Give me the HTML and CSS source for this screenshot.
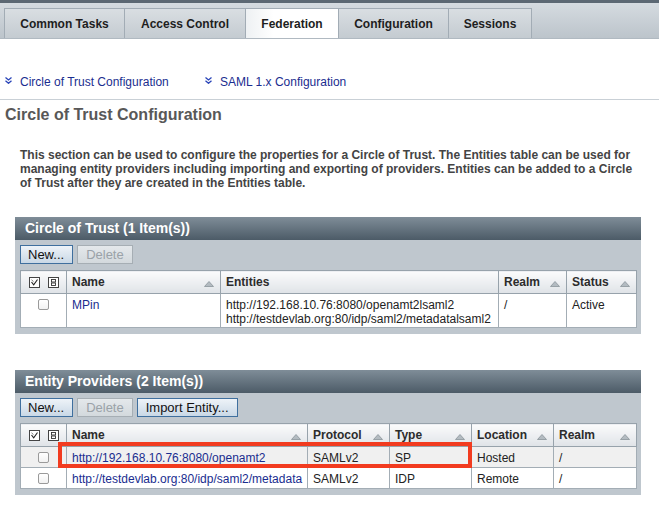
FILE: index.html
```html
<!DOCTYPE html>
<html>
<head>
<meta charset="utf-8">
<link rel="stylesheet" href="styles.css">
</head>
<body>
<div class="topbar"></div>
<div class="tabs">
  <div class="tab w-common">Common Tasks</div>
  <div class="tab w-access">Access Control</div>
  <div class="tab w-fed active">Federation</div>
  <div class="tab w-conf">Configuration</div>
  <div class="tab w-sess">Sessions</div>
</div>
<div class="subnav">
  <a class="sublink first"><svg class="dchev" width="7" height="7" viewBox="0 0 7 7"><polyline points="0.5,0.5 3.5,3 6.5,0.5" /><polyline points="0.5,3.8 3.5,6.3 6.5,3.8" /></svg>Circle of Trust Configuration</a>
  <a class="sublink"><svg class="dchev" width="7" height="7" viewBox="0 0 7 7"><polyline points="0.5,0.5 3.5,3 6.5,0.5" /><polyline points="0.5,3.8 3.5,6.3 6.5,3.8" /></svg>SAML 1.x Configuration</a>
</div>
<h1 class="title">Circle of Trust Configuration</h1>
<p class="desc">This section can be used to configure the properties for a Circle of Trust. The Entities table can be used for managing entity providers including importing and exporting of providers. Entities can be added to a Circle of Trust after they are created in the Entities table.</p>

<section class="panel cot">
  <div class="panel-head">Circle of Trust (1 Item(s))</div>
  <div class="panel-body">
    <div class="buttons">
      <span class="btn primary">New...</span>
      <span class="btn disabled">Delete</span>
    </div>
    <div class="table-wrap">
      <table class="grid">
        <colgroup><col class="c-chk"><col class="c-name1"><col class="c-ent"><col class="c-realm1"><col class="c-status"></colgroup>
        <thead>
          <tr>
            <th class="chk-head"><span class="hicons"><svg width="11" height="11" viewBox="0 0 11 11"><rect x="0.5" y="0.5" width="10" height="10" fill="#fff" stroke="#444"/><polyline points="2.5,5 4.7,7.8 8.5,2.5" fill="none" stroke="#222" stroke-width="1.1"/><line x1="2.5" y1="2.8" x2="4.5" y2="4.6" stroke="#555" stroke-width="0.8"/></svg><svg width="11" height="11" viewBox="0 0 11 11"><rect x="0.5" y="0.5" width="10" height="10" fill="#fff" stroke="#444"/><rect x="3.5" y="2.5" width="4" height="2.5" fill="none" stroke="#333" stroke-width="0.9"/><rect x="3.5" y="6" width="4" height="2.5" fill="none" stroke="#333" stroke-width="0.9"/></svg></span></th>
            <th><div class="th-in">Name<svg class="sort" width="10" height="6" viewBox="0 0 10 6"><polygon points="5,0.5 9.5,5.5 0.5,5.5"/></svg></div></th>
            <th><div class="th-in">Entities</div></th>
            <th><div class="th-in">Realm<svg class="sort" width="10" height="6" viewBox="0 0 10 6"><polygon points="5,0.5 9.5,5.5 0.5,5.5"/></svg></div></th>
            <th><div class="th-in">Status<svg class="sort" width="10" height="6" viewBox="0 0 10 6"><polygon points="5,0.5 9.5,5.5 0.5,5.5"/></svg></div></th>
          </tr>
        </thead>
        <tbody>
          <tr class="tall">
            <td class="chk"><span class="cb"></span></td>
            <td><a class="link">MPin</a></td>
            <td>http://192.168.10.76:8080/openamt2lsaml2<br>http://testdevlab.org:80/idp/saml2/metadatalsaml2</td>
            <td>/</td>
            <td>Active</td>
          </tr>
        </tbody>
      </table>
    </div>
  </div>
</section>

<section class="panel ent">
  <div class="panel-head">Entity Providers (2 Item(s))</div>
  <div class="panel-body">
    <div class="buttons">
      <span class="btn primary">New...</span>
      <span class="btn disabled">Delete</span>
      <span class="btn primary">Import Entity...</span>
    </div>
    <div class="table-wrap">
      <table class="grid">
        <colgroup><col class="c-chk"><col class="c-name2"><col class="c-mid"><col class="c-mid"><col class="c-mid"><col class="c-realm2"></colgroup>
        <thead>
          <tr>
            <th class="chk-head"><span class="hicons"><svg width="11" height="11" viewBox="0 0 11 11"><rect x="0.5" y="0.5" width="10" height="10" fill="#fff" stroke="#444"/><polyline points="2.5,5 4.7,7.8 8.5,2.5" fill="none" stroke="#222" stroke-width="1.1"/><line x1="2.5" y1="2.8" x2="4.5" y2="4.6" stroke="#555" stroke-width="0.8"/></svg><svg width="11" height="11" viewBox="0 0 11 11"><rect x="0.5" y="0.5" width="10" height="10" fill="#fff" stroke="#444"/><rect x="3.5" y="2.5" width="4" height="2.5" fill="none" stroke="#333" stroke-width="0.9"/><rect x="3.5" y="6" width="4" height="2.5" fill="none" stroke="#333" stroke-width="0.9"/></svg></span></th>
            <th><div class="th-in">Name<svg class="sort" width="10" height="6" viewBox="0 0 10 6"><polygon points="5,0.5 9.5,5.5 0.5,5.5"/></svg></div></th>
            <th><div class="th-in">Protocol<svg class="sort" width="10" height="6" viewBox="0 0 10 6"><polygon points="5,0.5 9.5,5.5 0.5,5.5"/></svg></div></th>
            <th><div class="th-in">Type<svg class="sort" width="10" height="6" viewBox="0 0 10 6"><polygon points="5,0.5 9.5,5.5 0.5,5.5"/></svg></div></th>
            <th><div class="th-in">Location<svg class="sort" width="10" height="6" viewBox="0 0 10 6"><polygon points="5,0.5 9.5,5.5 0.5,5.5"/></svg></div></th>
            <th><div class="th-in">Realm<svg class="sort" width="10" height="6" viewBox="0 0 10 6"><polygon points="5,0.5 9.5,5.5 0.5,5.5"/></svg></div></th>
          </tr>
        </thead>
        <tbody>
          <tr class="short hl">
            <td class="chk"><span class="cb"></span></td>
            <td><a class="link">http://192.168.10.76:8080/openamt2</a></td>
            <td>SAMLv2</td>
            <td>SP</td>
            <td>Hosted</td>
            <td>/</td>
          </tr>
          <tr class="short">
            <td class="chk"><span class="cb"></span></td>
            <td><a class="link">http://testdevlab.org:80/idp/saml2/metadata</a></td>
            <td>SAMLv2</td>
            <td>IDP</td>
            <td>Remote</td>
            <td>/</td>
          </tr>
        </tbody>
      </table>
      <div class="redbox"></div>
    </div>
  </div>
</section>
</body>
</html>
```
FILE: styles.css
```css
* { box-sizing: border-box; }
body {
  margin: 0;
  font-family: "Liberation Sans", Arial, sans-serif;
  background: #fff;
  color: #222;
  width: 659px;
  overflow: hidden;
}
.topbar {
  height: 3px;
  background: #5c6873;
}
.tabs {
  display: flex;
  padding: 5px 0 0 4px;
  background: linear-gradient(#d5dbe0, #bcc4cb);
  border-bottom: 1px solid #b0b9c1;
}
.tab {
  height: 30px;
  line-height: 31px;
  text-align: center;
  font-size: 12px;
  font-weight: bold;
  color: #1e1e1e;
  border: 1px solid #a2acb5;
  border-bottom: none;
  border-left: none;
  background: linear-gradient(#d9dee2, #c4cbd1);
}
.tab:first-child { border-left: 1px solid #a2acb5; }
.w-common { width: 121px; }
.w-access { width: 121px; }
.w-fed { width: 93px; }
.w-conf { width: 110px; }
.w-sess { width: 83px; }
.tab.active {
  background: linear-gradient(90deg, #eef1f3, #ffffff 30%);
}
.subnav {
  display: flex;
  padding: 36px 0 10px 5px;
  border-bottom: 1px solid #c9d0d6;
}
.sublink {
  display: flex;
  align-items: center;
  font-size: 12px;
  line-height: 14px;
  color: #1a2d8f;
}
.sublink.first { width: 200px; }
.dchev {
  margin-right: 8px;
  margin-top: -3px;
}
.dchev polyline {
  fill: none;
  stroke: #2a45b8;
  stroke-width: 1.3;
}
.title {
  margin: 5px 0 0 5px;
  font-size: 16px;
  line-height: 19px;
  font-weight: bold;
  color: #585858;
}
.desc {
  margin: 24px 0 0 20px;
  width: 618px;
  font-size: 12px;
  line-height: 14px;
  font-weight: bold;
  color: #444;
}
.panel {
  margin-left: 15px;
  width: 626px;
  background: #bfc7ce;
}
.cot { margin-top: 27px; }
.ent { margin-top: 36px; }
.panel-head {
  height: 23px;
  line-height: 23px;
  padding-left: 10px;
  font-size: 14px;
  font-weight: bold;
  color: #fff;
  background: linear-gradient(#7f8d98, #4c5b67);
}
.panel-body {
  padding: 5px 5px 6px 5px;
}
.buttons {
  display: flex;
  gap: 4px;
  height: 19px;
}
.btn {
  height: 19px;
  line-height: 17px;
  padding: 0 8px;
  font-size: 13px;
  border: 1px solid #3f6f9e;
  background: linear-gradient(#eef3f8, #c9d8e6);
  color: #111;
}
.btn.primary:first-child { padding: 0 8px 0 7px; }
.btn.disabled {
  border-color: #a6aeb4;
  background: linear-gradient(#e4e8eb, #d3d9dd);
  color: #9aa2a8;
}
.table-wrap {
  position: relative;
  margin-top: 6px;
  width: 616px;
}
.grid {
  width: 616px;
  border-collapse: collapse;
  table-layout: fixed;
  font-size: 12px;
  border: 1px solid #8f9aa3;
}
.c-chk { width: 46px; }
.c-name1 { width: 154px; }
.c-ent { width: 278px; }
.c-realm1 { width: 68px; }
.c-status { width: 70px; }
.c-name2 { width: 241px; }
.c-mid { width: 82px; }
.c-realm2 { width: 83px; }
.grid th {
  height: 23px;
  padding: 0 6px 0 5px;
  text-align: left;
  font-weight: bold;
  color: #2c2c2c;
  background: linear-gradient(#fbfbfc, #dfe3e7);
  border: 1px solid #97a2ab;
}
.th-in {
  display: flex;
  justify-content: space-between;
  align-items: center;
}
.sort polygon {
  fill: #b3bbc1;
  stroke: #8a949b;
  stroke-width: 0.8;
}
.sort { margin-top: 3px; }
.chk-head { padding: 0 !important; }
.hicons {
  display: flex;
  justify-content: center;
  gap: 8px;
  padding-left: 1px;
}
.hicons svg { display: block; }
.grid td {
  padding: 0 5px;
  border: 1px solid #a3adb5;
  background: #fff;
  color: #222;
  white-space: nowrap;
  overflow: hidden;
}
.tall td {
  height: 34px;
  vertical-align: top;
  padding-top: 4px;
  line-height: 14px;
}
.short td {
  height: 21px;
  line-height: 14px;
  vertical-align: middle;
  padding-top: 1px;
}
.hl td { background: #f0f0f0; }
.grid td.chk { text-align: center; padding: 0; }
.tall td.chk { padding-top: 5px; }
.cb {
  display: inline-block;
  width: 11px;
  height: 11px;
  border: 1px solid #9a9a9a;
  border-radius: 2px;
  background: linear-gradient(#fff, #f2f2f2);
  vertical-align: middle;
}
.tall .cb { vertical-align: top; }
.link { color: #1a2d8f; }
.redbox {
  position: absolute;
  left: 38px;
  top: 19px;
  width: 414px;
  height: 26px;
  border: 4px solid #f23b1f;
}
```
